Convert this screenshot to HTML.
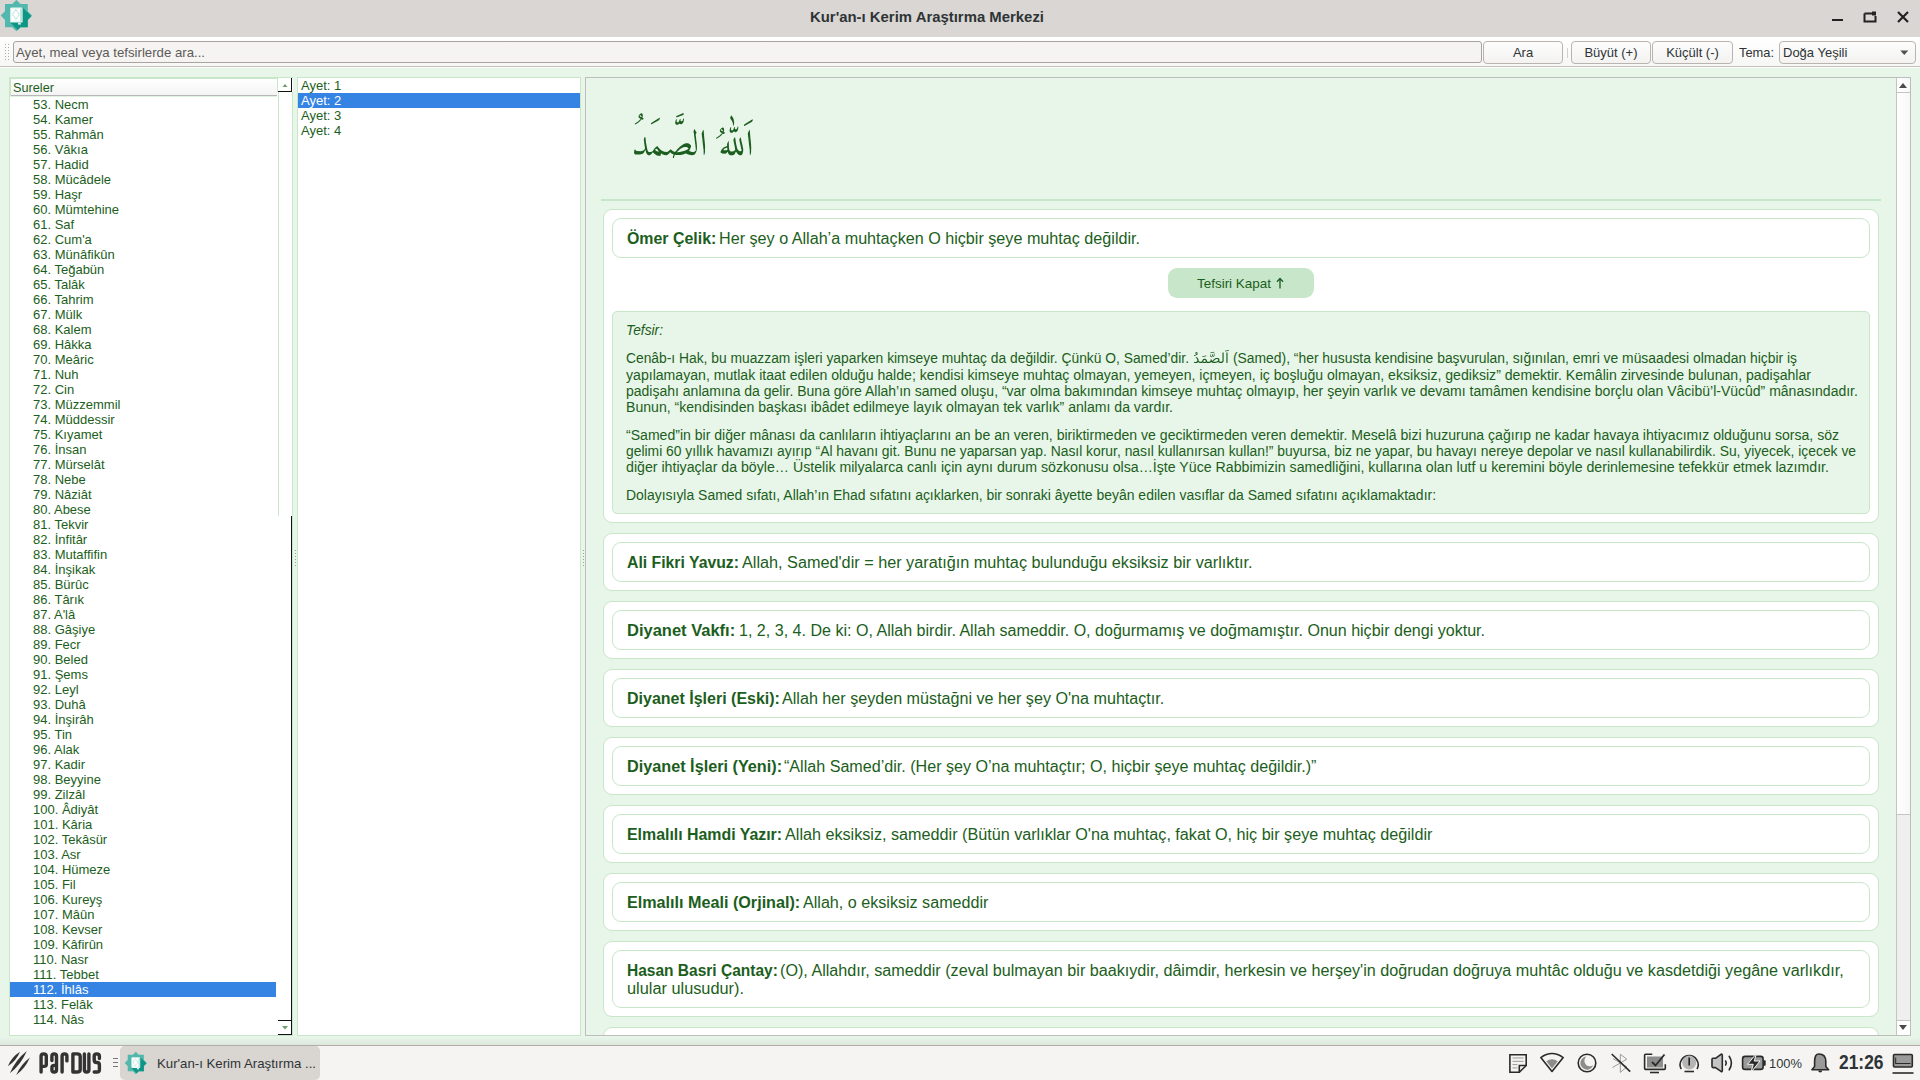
<!DOCTYPE html><html><head><meta charset="utf-8"><style>
*{box-sizing:border-box;margin:0;padding:0}
html,body{width:1920px;height:1080px;overflow:hidden;background:#e8f5e9;font-family:"Liberation Sans",sans-serif}
.a{position:absolute}
.fit{display:inline-block;white-space:nowrap;transform-origin:0 50%}
#title{left:0;top:0;width:1920px;height:37px;background:#dad6d3}
#tool{left:0;top:37px;width:1920px;height:30px;background:linear-gradient(#ffffff,#f6f6f5)}
.btn{position:absolute;height:23px;border:1px solid #b9b4ae;border-radius:4px;background:linear-gradient(#fdfdfd,#f3f2f1);font-size:13px;color:#2e3436;text-align:center;line-height:21px}
.list{position:absolute;background:#fff;font-size:12px;color:#1b5e20}
.row{position:absolute;height:15px;line-height:15px;white-space:nowrap}
.sel{background:#3584e4;color:#fff}
.card{position:absolute;left:603px;width:1276px;background:#fff;border:1px solid #c8e6c9;border-radius:9px}
.meal{position:absolute;left:612px;width:1258px;background:#fff;border:1px solid #c8e6c9;border-radius:9px;font-size:16px;color:#1b5e20}
.meal b{font-weight:bold}
.tl{position:absolute;left:626px;font-size:14px;color:#1b5e20;line-height:16px;white-space:nowrap}
</style></head><body>
<div id="title" class="a">
<svg class="a" style="left:0;top:0" width="34" height="34" viewBox="0 0 34 34">
<defs><clipPath id="star1"><rect x="5" y="4" width="22.8" height="23.2"/><rect x="-11.1" y="-11.1" width="22.2" height="22.2" transform="translate(16.4,15.6) rotate(45)"/></clipPath></defs>
<g clip-path="url(#star1)">
<rect x="0" y="0" width="34" height="34" fill="#52b8ad"/>
<path d="M22.6 7.4 L42.6 27.4 L30.2 42.6 L10.2 22.6 Z" fill="#0f9585"/>
</g>
<rect x="10.2" y="7.4" width="12.4" height="15.2" rx="1.2" fill="#eaf7f5"/>
<rect x="11.6" y="8.8" width="8.6" height="11.8" fill="#ffffff"/>
<rect x="20.4" y="8.4" width="1.4" height="13.2" fill="#a9dcd6"/>
<path d="M15.9 9.6 L19.4 14.6 L15.9 19.6 L12.4 14.6 Z" fill="#fff" stroke="#6cc4b9" stroke-width="0.8" stroke-dasharray="1.2 0.9"/>
<rect x="18" y="22.6" width="2.8" height="2" fill="#d5efeb"/>
</svg>
<div class="a" style="left:810px;top:8px;font-size:15px;font-weight:bold;color:#2e3436"><span class="fit" style="transform:scaleX(0.9932);">Kur'an-ı Kerim Araştırma Merkezi</span></div>
<div class="a" style="left:1832px;top:19px;width:11px;height:2px;background:#222"></div>
<svg class="a" style="left:1863px;top:10px" width="14" height="14" viewBox="0 0 14 14"><path d="M1.5 3.5 H9 M1.5 3.5 V11.5 H12.5 V6" fill="none" stroke="#222" stroke-width="2"/><rect x="9" y="1.5" width="4" height="4" fill="#222"/></svg>
<svg class="a" style="left:1896px;top:10px" width="14" height="14" viewBox="0 0 14 14"><path d="M2 2 L12 12 M12 2 L2 12" stroke="#222" stroke-width="2.2"/></svg>
</div>
<div id="tool" class="a">
<div class="a" style="left:5px;top:7px;width:1px;height:1px;background:#b0aca8"></div>
<div class="a" style="left:8px;top:7px;width:1px;height:1px;background:#b0aca8"></div>
<div class="a" style="left:5px;top:10px;width:1px;height:1px;background:#b0aca8"></div>
<div class="a" style="left:8px;top:10px;width:1px;height:1px;background:#b0aca8"></div>
<div class="a" style="left:5px;top:13px;width:1px;height:1px;background:#b0aca8"></div>
<div class="a" style="left:8px;top:13px;width:1px;height:1px;background:#b0aca8"></div>
<div class="a" style="left:5px;top:16px;width:1px;height:1px;background:#b0aca8"></div>
<div class="a" style="left:8px;top:16px;width:1px;height:1px;background:#b0aca8"></div>
<div class="a" style="left:5px;top:19px;width:1px;height:1px;background:#b0aca8"></div>
<div class="a" style="left:8px;top:19px;width:1px;height:1px;background:#b0aca8"></div>
<div class="a" style="left:5px;top:22px;width:1px;height:1px;background:#b0aca8"></div>
<div class="a" style="left:8px;top:22px;width:1px;height:1px;background:#b0aca8"></div>
<div class="a" style="left:13px;top:4px;width:1469px;height:22px;border:1px solid #a9a49f;border-radius:3px;background:#f5f4f3;"></div>
<div class="a" style="left:16px;top:8px;font-size:13px;color:#5e5a57"><span class="fit" style="transform:scaleX(1.0151);">Ayet, meal veya tefsirlerde ara...</span></div>
<div class="btn" style="left:1483px;top:4px;width:80px">Ara</div>
<div class="a" style="left:1567px;top:11px;width:1px;height:10px;background:#d5d2ce"></div>
<div class="btn" style="left:1571px;top:4px;width:80px">Büyüt (+)</div>
<div class="btn" style="left:1652px;top:4px;width:81px">Küçült (-)</div>
<div class="a" style="left:1739px;top:8px;font-size:13px;color:#2e3436"><span class="fit" style="transform:scaleX(0.9885);">Tema:</span></div>
<div class="btn" style="left:1779px;top:4px;width:137px;text-align:left;padding-left:3px"><span class="fit">Doğa Yeşili</span></div>
<svg class="a" style="left:1900px;top:13px" width="9" height="6"><path d="M0.3 0.5 H8.3 L4.3 5 Z" fill="#505050"/></svg>
<div class="a" style="left:0;top:29px;width:1920px;height:1px;background:#c4c1bd"></div>
<div class="a" style="left:0;top:30px;width:1920px;height:1px;background:#fafcfa"></div>
</div>
<div class="a" style="left:0;top:1037px;width:1920px;height:8px;background:linear-gradient(#e8f5e9,#dde8de)"></div>
<div class="list" style="left:9px;top:77px;width:284px;height:959px;border:1px solid #c8e6c9;border-right:none"></div>
<div class="a" style="left:11px;top:79px;width:266px;height:17px;background:linear-gradient(#ffffff,#f5f4f4);border-bottom:1px solid #b9b5b9"></div><div class="a" style="left:10px;top:78px;width:267px;height:1px;background:#c8e6c9"></div><div class="a" style="left:10px;top:78px;width:1px;height:18px;background:#c8e6c9"></div>
<div class="a" style="left:13px;top:80px;font-size:13px;color:#1b5e20"><span class="fit" style="transform:scaleX(0.9780);">Sureler</span></div>
<div class="a" style="left:33px;top:97px;font-size:13px;line-height:15px;color:#1b5e20"><span class="fit">53. Necm</span></div>
<div class="a" style="left:33px;top:112px;font-size:13px;line-height:15px;color:#1b5e20"><span class="fit">54. Kamer</span></div>
<div class="a" style="left:33px;top:127px;font-size:13px;line-height:15px;color:#1b5e20"><span class="fit">55. Rahmân</span></div>
<div class="a" style="left:33px;top:142px;font-size:13px;line-height:15px;color:#1b5e20"><span class="fit">56. Vâkıa</span></div>
<div class="a" style="left:33px;top:157px;font-size:13px;line-height:15px;color:#1b5e20"><span class="fit">57. Hadid</span></div>
<div class="a" style="left:33px;top:172px;font-size:13px;line-height:15px;color:#1b5e20"><span class="fit">58. Mücâdele</span></div>
<div class="a" style="left:33px;top:187px;font-size:13px;line-height:15px;color:#1b5e20"><span class="fit">59. Haşr</span></div>
<div class="a" style="left:33px;top:202px;font-size:13px;line-height:15px;color:#1b5e20"><span class="fit">60. Mümtehine</span></div>
<div class="a" style="left:33px;top:217px;font-size:13px;line-height:15px;color:#1b5e20"><span class="fit">61. Saf</span></div>
<div class="a" style="left:33px;top:232px;font-size:13px;line-height:15px;color:#1b5e20"><span class="fit">62. Cum'a</span></div>
<div class="a" style="left:33px;top:247px;font-size:13px;line-height:15px;color:#1b5e20"><span class="fit">63. Münâfikûn</span></div>
<div class="a" style="left:33px;top:262px;font-size:13px;line-height:15px;color:#1b5e20"><span class="fit">64. Teğabün</span></div>
<div class="a" style="left:33px;top:277px;font-size:13px;line-height:15px;color:#1b5e20"><span class="fit">65. Talâk</span></div>
<div class="a" style="left:33px;top:292px;font-size:13px;line-height:15px;color:#1b5e20"><span class="fit">66. Tahrim</span></div>
<div class="a" style="left:33px;top:307px;font-size:13px;line-height:15px;color:#1b5e20"><span class="fit">67. Mülk</span></div>
<div class="a" style="left:33px;top:322px;font-size:13px;line-height:15px;color:#1b5e20"><span class="fit">68. Kalem</span></div>
<div class="a" style="left:33px;top:337px;font-size:13px;line-height:15px;color:#1b5e20"><span class="fit">69. Hâkka</span></div>
<div class="a" style="left:33px;top:352px;font-size:13px;line-height:15px;color:#1b5e20"><span class="fit">70. Meâric</span></div>
<div class="a" style="left:33px;top:367px;font-size:13px;line-height:15px;color:#1b5e20"><span class="fit">71. Nuh</span></div>
<div class="a" style="left:33px;top:382px;font-size:13px;line-height:15px;color:#1b5e20"><span class="fit">72. Cin</span></div>
<div class="a" style="left:33px;top:397px;font-size:13px;line-height:15px;color:#1b5e20"><span class="fit">73. Müzzemmil</span></div>
<div class="a" style="left:33px;top:412px;font-size:13px;line-height:15px;color:#1b5e20"><span class="fit">74. Müddessir</span></div>
<div class="a" style="left:33px;top:427px;font-size:13px;line-height:15px;color:#1b5e20"><span class="fit">75. Kıyamet</span></div>
<div class="a" style="left:33px;top:442px;font-size:13px;line-height:15px;color:#1b5e20"><span class="fit">76. İnsan</span></div>
<div class="a" style="left:33px;top:457px;font-size:13px;line-height:15px;color:#1b5e20"><span class="fit">77. Mürselât</span></div>
<div class="a" style="left:33px;top:472px;font-size:13px;line-height:15px;color:#1b5e20"><span class="fit">78. Nebe</span></div>
<div class="a" style="left:33px;top:487px;font-size:13px;line-height:15px;color:#1b5e20"><span class="fit">79. Nâziât</span></div>
<div class="a" style="left:33px;top:502px;font-size:13px;line-height:15px;color:#1b5e20"><span class="fit">80. Abese</span></div>
<div class="a" style="left:33px;top:517px;font-size:13px;line-height:15px;color:#1b5e20"><span class="fit">81. Tekvir</span></div>
<div class="a" style="left:33px;top:532px;font-size:13px;line-height:15px;color:#1b5e20"><span class="fit">82. İnfitâr</span></div>
<div class="a" style="left:33px;top:547px;font-size:13px;line-height:15px;color:#1b5e20"><span class="fit">83. Mutaffifin</span></div>
<div class="a" style="left:33px;top:562px;font-size:13px;line-height:15px;color:#1b5e20"><span class="fit">84. İnşikak</span></div>
<div class="a" style="left:33px;top:577px;font-size:13px;line-height:15px;color:#1b5e20"><span class="fit">85. Bürûc</span></div>
<div class="a" style="left:33px;top:592px;font-size:13px;line-height:15px;color:#1b5e20"><span class="fit">86. Târık</span></div>
<div class="a" style="left:33px;top:607px;font-size:13px;line-height:15px;color:#1b5e20"><span class="fit">87. A'lâ</span></div>
<div class="a" style="left:33px;top:622px;font-size:13px;line-height:15px;color:#1b5e20"><span class="fit">88. Gâşiye</span></div>
<div class="a" style="left:33px;top:637px;font-size:13px;line-height:15px;color:#1b5e20"><span class="fit">89. Fecr</span></div>
<div class="a" style="left:33px;top:652px;font-size:13px;line-height:15px;color:#1b5e20"><span class="fit">90. Beled</span></div>
<div class="a" style="left:33px;top:667px;font-size:13px;line-height:15px;color:#1b5e20"><span class="fit">91. Şems</span></div>
<div class="a" style="left:33px;top:682px;font-size:13px;line-height:15px;color:#1b5e20"><span class="fit">92. Leyl</span></div>
<div class="a" style="left:33px;top:697px;font-size:13px;line-height:15px;color:#1b5e20"><span class="fit">93. Duhâ</span></div>
<div class="a" style="left:33px;top:712px;font-size:13px;line-height:15px;color:#1b5e20"><span class="fit">94. İnşirâh</span></div>
<div class="a" style="left:33px;top:727px;font-size:13px;line-height:15px;color:#1b5e20"><span class="fit">95. Tin</span></div>
<div class="a" style="left:33px;top:742px;font-size:13px;line-height:15px;color:#1b5e20"><span class="fit">96. Alak</span></div>
<div class="a" style="left:33px;top:757px;font-size:13px;line-height:15px;color:#1b5e20"><span class="fit">97. Kadir</span></div>
<div class="a" style="left:33px;top:772px;font-size:13px;line-height:15px;color:#1b5e20"><span class="fit">98. Beyyine</span></div>
<div class="a" style="left:33px;top:787px;font-size:13px;line-height:15px;color:#1b5e20"><span class="fit">99. Zilzâl</span></div>
<div class="a" style="left:33px;top:802px;font-size:13px;line-height:15px;color:#1b5e20"><span class="fit">100. Âdiyât</span></div>
<div class="a" style="left:33px;top:817px;font-size:13px;line-height:15px;color:#1b5e20"><span class="fit">101. Kâria</span></div>
<div class="a" style="left:33px;top:832px;font-size:13px;line-height:15px;color:#1b5e20"><span class="fit">102. Tekâsür</span></div>
<div class="a" style="left:33px;top:847px;font-size:13px;line-height:15px;color:#1b5e20"><span class="fit">103. Asr</span></div>
<div class="a" style="left:33px;top:862px;font-size:13px;line-height:15px;color:#1b5e20"><span class="fit">104. Hümeze</span></div>
<div class="a" style="left:33px;top:877px;font-size:13px;line-height:15px;color:#1b5e20"><span class="fit">105. Fil</span></div>
<div class="a" style="left:33px;top:892px;font-size:13px;line-height:15px;color:#1b5e20"><span class="fit">106. Kureyş</span></div>
<div class="a" style="left:33px;top:907px;font-size:13px;line-height:15px;color:#1b5e20"><span class="fit">107. Mâûn</span></div>
<div class="a" style="left:33px;top:922px;font-size:13px;line-height:15px;color:#1b5e20"><span class="fit">108. Kevser</span></div>
<div class="a" style="left:33px;top:937px;font-size:13px;line-height:15px;color:#1b5e20"><span class="fit">109. Kâfirûn</span></div>
<div class="a" style="left:33px;top:952px;font-size:13px;line-height:15px;color:#1b5e20"><span class="fit">110. Nasr</span></div>
<div class="a" style="left:33px;top:967px;font-size:13px;line-height:15px;color:#1b5e20"><span class="fit">111. Tebbet</span></div>
<div class="row sel" style="left:10px;top:982px;width:266px"></div>
<div class="a" style="left:33px;top:982px;font-size:13px;line-height:15px;color:#fff"><span class="fit">112. İhlâs</span></div>
<div class="a" style="left:33px;top:997px;font-size:13px;line-height:15px;color:#1b5e20"><span class="fit">113. Felâk</span></div>
<div class="a" style="left:33px;top:1012px;font-size:13px;line-height:15px;color:#1b5e20"><span class="fit">114. Nâs</span></div>
<div class="a" style="left:278px;top:92px;width:1px;height:424px;background:#c8e6c9"></div><div class="a" style="left:277px;top:78px;width:1px;height:14px;background:#c8e6c9"></div><div class="a" style="left:10px;top:96px;width:267px;height:1px;background:#dff3df"></div>
<div class="a" style="left:291px;top:78px;width:1px;height:14px;background:#111"></div>
<div class="a" style="left:278px;top:91px;width:14px;height:1px;background:#111"></div>
<svg class="a" style="left:282px;top:83.5px" width="6" height="3.5"><path d="M0 3.5 L3 0 L6 3.5 Z" fill="#6f9f71"/></svg>
<div class="a" style="left:291px;top:516px;width:1px;height:519px;background:#111"></div>
<div class="a" style="left:278px;top:1020px;width:13px;height:1px;background:#111"></div>
<div class="a" style="left:278px;top:1034px;width:14px;height:1px;background:#111"></div>
<svg class="a" style="left:282px;top:1026px" width="6" height="3.5"><path d="M0 0 L6 0 L3 3.5 Z" fill="#6f9f71"/></svg>
<div class="a" style="left:292px;top:92px;width:1px;height:944px;background:#c8e6c9"></div>
<div class="a" style="left:295px;top:550px;width:1px;height:1px;background:#9e9e9e"></div>
<div class="a" style="left:583px;top:550px;width:1px;height:1px;background:#9e9e9e"></div>
<div class="a" style="left:295px;top:553px;width:1px;height:1px;background:#9e9e9e"></div>
<div class="a" style="left:583px;top:553px;width:1px;height:1px;background:#9e9e9e"></div>
<div class="a" style="left:295px;top:556px;width:1px;height:1px;background:#9e9e9e"></div>
<div class="a" style="left:583px;top:556px;width:1px;height:1px;background:#9e9e9e"></div>
<div class="a" style="left:295px;top:559px;width:1px;height:1px;background:#9e9e9e"></div>
<div class="a" style="left:583px;top:559px;width:1px;height:1px;background:#9e9e9e"></div>
<div class="a" style="left:295px;top:562px;width:1px;height:1px;background:#9e9e9e"></div>
<div class="a" style="left:583px;top:562px;width:1px;height:1px;background:#9e9e9e"></div>
<div class="a" style="left:295px;top:565px;width:1px;height:1px;background:#9e9e9e"></div>
<div class="a" style="left:583px;top:565px;width:1px;height:1px;background:#9e9e9e"></div>
<div class="list" style="left:297px;top:77px;width:284px;height:959px;border:1px solid #c8e6c9"></div>
<div class="a" style="left:301px;top:78px;font-size:13px;line-height:15px;color:#1b5e20"><span class="fit">Ayet: 1</span></div>
<div class="row sel" style="left:298px;top:93px;width:282px"></div>
<div class="a" style="left:301px;top:93px;font-size:13px;line-height:15px;color:#fff"><span class="fit">Ayet: 2</span></div>
<div class="a" style="left:301px;top:108px;font-size:13px;line-height:15px;color:#1b5e20"><span class="fit">Ayet: 3</span></div>
<div class="a" style="left:301px;top:123px;font-size:13px;line-height:15px;color:#1b5e20"><span class="fit">Ayet: 4</span></div>
<div class="a" style="left:585px;top:77px;width:1326px;height:959px;border:1px solid #bdbdbd;border-right:2px solid #bdbdbd;overflow:hidden;background:#e8f5e9">
</div>
<div class="a" style="left:1896px;top:78px;width:14px;height:957px;background:#efefef;border-left:1px solid #c4c4c4"></div>
<div class="a" style="left:1897px;top:78px;width:13px;height:737px;background:linear-gradient(90deg,#fff,#f7f7f7)"></div>
<div class="a" style="left:1897px;top:92px;width:13px;height:1px;background:#c4c4c4"></div>
<div class="a" style="left:1897px;top:814px;width:13px;height:1px;background:#c4c4c4"></div>
<svg class="a" style="left:1899px;top:83px" width="8" height="5"><path d="M0 5 L4 0 L8 5 Z" fill="#4a4a4a"/></svg>
<div class="a" style="left:1897px;top:1020px;width:13px;height:15px;background:#fff;border-top:1px solid #c4c4c4"></div>
<svg class="a" style="left:1899px;top:1025px" width="8" height="5"><path d="M0 0 L8 0 L4 5 Z" fill="#4a4a4a"/></svg>
<svg class="a" style="left:633.7px;top:112.5px" width="119.1" height="45.3" viewBox="0 0 772 296" preserveAspectRatio="none"><path d="M691 159 L689 160 L684 169 L683 180 L689 205 L689 209 L692 218 L692 222 L694 227 L694 231 L696 236 L697 246 L698 247 L697 249 L689 250 L682 248 L673 240 L670 235 L662 203 L656 162 L653 159 L645 172 L645 182 L654 225 L654 230 L656 237 L655 242 L649 248 L638 252 L627 251 L620 245 L616 233 L614 183 L613 182 L603 202 L604 215 L587 222 L577 229 L567 240 L561 253 L562 260 L573 265 L588 266 L597 264 L607 253 L611 265 L619 274 L624 276 L639 276 L648 273 L652 269 L661 252 L671 267 L678 273 L686 276 L694 276 L698 274 L701 271 L705 262 L708 246 L708 236 L700 196 L696 182 L695 173Z M605 231 L605 241 L599 244 L588 244 L587 243 L582 243 L579 241 L585 234 L597 228 L603 226Z M749 110 L747 111 L738 132 L738 142 L739 143 L740 159 L741 160 L746 210 L747 211 L747 219 L748 220 L748 229 L750 238 L751 274 L753 276 L757 267 L759 257 L760 218 L759 217 L759 202 L758 201 L758 190 L757 189 L756 171 L755 170 L751 118Z M450 110 L448 111 L439 132 L439 142 L440 143 L441 159 L442 160 L447 210 L448 211 L448 219 L449 220 L449 229 L451 238 L452 274 L454 276 L458 267 L460 257 L461 218 L460 217 L460 202 L459 201 L459 190 L458 189 L457 171 L456 170 L452 118Z M406 127 L399 118 L395 108 L393 106 L391 107 L386 119 L386 125 L388 131 L390 152 L392 160 L392 167 L393 168 L393 175 L394 176 L394 183 L395 184 L395 191 L396 192 L396 199 L398 208 L398 216 L399 217 L399 225 L400 226 L400 238 L401 239 L400 246 L391 254 L384 256 L383 255 L376 255 L357 249 L368 226 L368 223 L370 219 L369 212 L362 204 L354 199 L348 197 L336 197 L322 203 L297 221 L281 237 L268 254 L261 253 L253 250 L237 237 L225 249 L215 255 L197 254 L185 249 L176 243 L162 230 L153 218 L150 218 L144 221 L134 230 L122 249 L115 253 L108 255 L96 255 L92 252 L87 242 L78 195 L74 158 L71 155 L64 169 L64 181 L65 182 L67 204 L68 205 L68 211 L71 226 L71 233 L69 237 L61 245 L45 250 L17 249 L11 244 L8 238 L5 238 L3 241 L1 249 L1 257 L0 258 L1 264 L6 270 L12 272 L34 272 L35 271 L46 270 L57 266 L65 258 L72 243 L74 242 L76 246 L78 257 L82 266 L88 273 L94 276 L101 276 L110 271 L122 257 L132 267 L139 272 L149 277 L159 280 L164 280 L165 281 L171 280 L173 277 L174 266 L175 265 L177 265 L181 268 L195 274 L210 276 L216 274 L222 270 L228 264 L231 259 L235 256 L243 264 L257 271 L252 287 L252 293 L254 295 L257 295 L259 293 L262 280 L265 273 L275 275 L301 275 L318 271 L334 264 L337 264 L352 271 L366 275 L371 275 L372 276 L387 275 L394 270 L399 263 L404 252 L408 237 L408 209 L407 208 L406 189 L405 188 L401 148 L400 147 L400 138 L405 131Z M137 240 L141 236 L149 233 L161 253 L158 254 L145 248 L137 242Z M354 232 L344 240 L324 249 L296 255 L289 255 L288 256 L280 256 L279 255 L299 235 L310 228 L325 222 L339 222 L348 226Z M578 95 L574 95 L566 99 L559 108 L556 116 L558 122 L563 127 L569 130 L570 132 L553 149 L536 160 L532 164 L532 166 L534 168 L544 164 L558 154 L570 142 L576 134 L581 137 L586 136 L589 128 L581 123 L584 115 L584 104 L582 99Z M567 107 L570 107 L576 114 L576 119 L575 120 L569 118 L564 114 L563 111Z M676 90 L674 88 L671 90 L670 98 L664 106 L658 106 L655 104 L654 102 L654 91 L650 91 L645 106 L640 112 L635 114 L632 113 L629 109 L629 102 L631 96 L629 93 L626 93 L623 99 L620 111 L620 119 L624 127 L628 129 L636 129 L641 127 L648 119 L656 125 L660 125 L665 123 L670 118 L673 112 L676 100Z M771 43 L770 42 L766 43 L719 72 L713 78 L713 85 L716 85 L765 57 L768 53Z M323 37 L320 36 L318 38 L316 49 L311 54 L305 54 L301 49 L302 40 L298 39 L291 56 L287 60 L282 62 L276 56 L278 43 L277 41 L274 41 L271 45 L267 60 L267 66 L269 72 L275 77 L284 77 L292 72 L295 68 L303 73 L307 73 L312 71 L317 66 L321 58 L324 42Z M168 31 L165 31 L114 63 L111 66 L110 69 L111 74 L114 74 L161 47 L166 41Z M629 16 L624 30 L624 36 L632 47 L638 59 L642 72 L643 81 L644 83 L646 83 L648 79 L648 72 L649 71 L649 56 L648 55 L647 45 L645 41 L645 38 L639 26 L631 16Z M51 2 L47 2 L39 6 L32 15 L29 23 L31 29 L36 34 L42 37 L43 39 L26 56 L9 67 L5 71 L5 73 L7 75 L17 71 L31 61 L43 49 L49 41 L54 44 L59 43 L62 35 L54 30 L57 22 L57 11 L55 6Z M40 14 L43 14 L49 21 L49 26 L48 27 L42 25 L37 21 L36 18Z M322 0 L316 1 L276 19 L273 23 L273 27 L274 28 L279 27 L319 13 L321 11Z" fill="#1b5e20" fill-rule="evenodd"/></svg>
<div class="a" style="left:601px;top:199px;width:1280px;height:2px;background:#c8e6c9"></div>
<div class="card" style="top:209px;height:314px"></div>
<div class="meal" style="top:218px;height:40px"></div>
<div class="a" style="left:627px;top:230px;font-size:16px;font-weight:bold;color:#1b5e20"><span class="fit" style="transform:scaleX(0.9943);">Ömer Çelik:</span></div>
<div class="a" style="left:719.0px;top:230px;font-size:16px;color:#1b5e20"><span class="fit" style="transform:scaleX(1.0094);">Her şey o Allah’a muhtaçken O hiçbir şeye muhtaç değildir.</span></div>
<div class="a" style="left:1168px;top:268px;width:146px;height:30px;background:#c8e6c9;border-radius:9px"></div>
<div class="a" style="left:1197px;top:276px;font-size:13px;color:#1b5e20"><span class="fit" style="transform:scaleX(1.0343);">Tefsiri Kapat</span></div>
<svg class="a" style="left:1276px;top:277px" width="8" height="12" viewBox="0 0 8 12"><path d="M4 11.5 V2 M1 4.8 L4 1.5 L7 4.8" fill="none" stroke="#1b5e20" stroke-width="1.3"/></svg>
<div class="a" style="left:612px;top:311px;width:1258px;height:203px;background:#e8f5e9;border:1px solid #c8e6c9;border-radius:5px"></div>
<div class="tl" style="top:322px;font-style:italic"><span class="fit" style="transform:scaleX(0.9838);">Tefsir:</span></div>
<div class="tl" style="top:367px"><span class="fit" style="transform:scaleX(1.0065);">yapılamayan, mutlak itaat edilen olduğu halde; kendisi kimseye muhtaç olmayan, yemeyen, içmeyen, iç boşluğu olmayan, eksiksiz, gediksiz” demektir. Kemâlin zirvesinde bulunan, padişahlar</span></div>
<div class="tl" style="top:383px"><span class="fit">padişahı anlamına da gelir. Buna göre Allah’ın samed oluşu, “var olma bakımından kimseye muhtaç olmayıp, her şeyin varlık ve devamı tamâmen kendisine borçlu olan Vâcibü’l-Vücûd” mânasındadır.</span></div>
<div class="tl" style="top:399px"><span class="fit" style="transform:scaleX(1.0056);">Bunun, “kendisinden başkası ibâdet edilmeye layık olmayan tek varlık” anlamı da vardır.</span></div>
<div class="tl" style="top:427px"><span class="fit" style="transform:scaleX(1.0044);">“Samed”in bir diğer mânası da canlıların ihtiyaçlarını an be an veren, biriktirmeden ve geciktirmeden veren demektir. Meselâ bizi huzuruna çağırıp ne kadar havaya ihtiyacımız olduğunu sorsa, söz</span></div>
<div class="tl" style="top:443px"><span class="fit" style="transform:scaleX(0.9904);">gelimi 60 yıllık havamızı ayırıp “Al havanı git. Bunu ne yaparsan yap. Nasıl korur, nasıl kullanırsan kullan!” buyursa, biz ne yapar, bu havayı nereye depolar ve nasıl kullanabilirdik. Su, yiyecek, içecek ve</span></div>
<div class="tl" style="top:459px"><span class="fit" style="transform:scaleX(1.0120);">diğer ihtiyaçlar da böyle… Üstelik milyalarca canlı için aynı durum sözkonusu olsa…İşte Yüce Rabbimizin samedliğini, kullarına olan lutf u keremini böyle derinlemesine tefekkür etmek lazımdır.</span></div>
<div class="tl" style="top:487px"><span class="fit" style="transform:scaleX(0.9961);">Dolayısıyla Samed sıfatı, Allah’ın Ehad sıfatını açıklarken, bir sonraki âyette beyân edilen vasıflar da Samed sıfatını açıklamaktadır:</span></div>
<div class="tl" style="top:350px"><span class="fit" style="transform:scaleX(0.9871);">Cenâb-ı Hak, bu muazzam işleri yaparken kimseye muhtaç da değildir. Çünkü O, Samed’dir.</span></div>
<div class="tl" style="top:350px;left:1233px"><span class="fit" style="transform:scaleX(0.9901);">(Samed), “her hususta kendisine başvurulan, sığınılan, emri ve müsaadesi olmadan hiçbir iş</span></div>
<svg class="a" style="left:1193.7px;top:350px" width="35" height="13.3" viewBox="0 0 601 229" preserveAspectRatio="none"><path d="M211 94 L143 109 L143 121 L211 106Z M351 62 L350 61 L339 61 L341 70 L341 88 L338 98 L333 102 L328 101 L323 95 L321 86 L321 69 L311 69 L309 102 L307 107 L301 112 L296 112 L292 108 L291 105 L291 81 L292 76 L281 76 L280 109 L284 119 L287 122 L293 125 L303 124 L307 122 L312 117 L318 104 L322 113 L327 116 L335 116 L342 113 L347 108 L351 98 L351 91 L352 90Z M556 41 L556 222 L576 222 L576 41Z M509 41 L489 41 L489 181 L486 192 L479 199 L465 202 L462 201 L453 202 L440 199 L432 193 L435 188 L437 181 L437 168 L434 157 L428 148 L423 144 L412 139 L397 136 L383 136 L372 139 L348 153 L337 162 L323 176 L313 189 L309 185 L306 179 L305 162 L284 162 L284 181 L283 184 L276 195 L271 199 L266 201 L258 201 L257 202 L249 201 L245 202 L244 201 L236 201 L231 199 L225 193 L221 185 L219 173 L213 164 L206 158 L194 152 L186 150 L171 151 L156 158 L148 166 L145 171 L142 180 L141 189 L139 193 L133 199 L123 202 L99 201 L91 198 L81 186 L79 180 L78 167 L74 156 L60 134 L50 124 L24 124 L42 141 L48 149 L56 166 L56 169 L58 173 L58 183 L55 191 L48 198 L37 204 L29 206 L18 206 L2 202 L2 222 L18 226 L40 225 L57 219 L63 215 L71 207 L80 216 L90 221 L95 222 L135 222 L143 220 L149 217 L160 224 L175 228 L190 228 L200 226 L209 221 L214 216 L219 220 L228 222 L270 222 L278 220 L286 216 L296 206 L306 216 L317 221 L322 221 L323 222 L370 222 L371 221 L380 221 L397 217 L416 208 L425 216 L433 220 L443 222 L476 222 L489 219 L500 211 L507 198 L507 194 L509 189Z M171 174 L177 172 L186 172 L193 175 L197 179 L200 186 L200 196 L197 202 L192 207 L189 208 L173 207 L160 200 L163 184 L165 180Z M415 167 L416 176 L414 180 L405 188 L390 196 L369 201 L352 201 L351 202 L330 202 L329 201 L336 191 L352 175 L365 165 L378 158 L384 156 L401 156 L409 159Z M53 39 L46 36 L36 36 L31 38 L26 43 L23 50 L24 61 L32 70 L37 72 L38 74 L33 79 L17 88 L0 91 L0 103 L11 102 L23 98 L43 87 L53 77 L67 77 L67 65 L60 65 L59 64 L60 50 L58 45Z M39 48 L43 48 L48 52 L48 60 L46 63 L38 60 L35 56 L35 52Z M349 29 L304 40 L282 44 L282 56 L348 42 L349 41Z M600 0 L532 15 L532 27 L600 12Z" fill="#1b5e20" fill-rule="evenodd"/></svg>
<div class="card" style="top:533px;height:58px"></div>
<div class="meal" style="top:542px;height:40px"></div>
<div class="a" style="left:627px;top:554px;font-size:16px;font-weight:bold;color:#1b5e20"><span class="fit" style="transform:scaleX(0.9865);">Ali Fikri Yavuz:</span></div>
<div class="a" style="left:741.7px;top:554px;font-size:16px;color:#1b5e20"><span class="fit" style="transform:scaleX(1.0143);">Allah, Samed'dir = her yaratığın muhtaç bulunduğu eksiksiz bir varlıktır.</span></div>
<div class="card" style="top:601px;height:58px"></div>
<div class="meal" style="top:610px;height:40px"></div>
<div class="a" style="left:627px;top:622px;font-size:16px;font-weight:bold;color:#1b5e20"><span class="fit" style="transform:scaleX(1.0311);">Diyanet Vakfı:</span></div>
<div class="a" style="left:738.6px;top:622px;font-size:16px;color:#1b5e20"><span class="fit" style="transform:scaleX(1.0034);">1, 2, 3, 4. De ki: O, Allah birdir. Allah sameddir. O, doğurmamış ve doğmamıştır. Onun hiçbir dengi yoktur.</span></div>
<div class="card" style="top:669px;height:58px"></div>
<div class="meal" style="top:678px;height:40px"></div>
<div class="a" style="left:627px;top:690px;font-size:16px;font-weight:bold;color:#1b5e20"><span class="fit">Diyanet İşleri (Eski):</span></div>
<div class="a" style="left:782.3px;top:690px;font-size:16px;color:#1b5e20"><span class="fit" style="transform:scaleX(1.0080);">Allah her şeyden müstağni ve her şey O'na muhtaçtır.</span></div>
<div class="card" style="top:737px;height:58px"></div>
<div class="meal" style="top:746px;height:40px"></div>
<div class="a" style="left:627px;top:758px;font-size:16px;font-weight:bold;color:#1b5e20"><span class="fit" style="transform:scaleX(1.0141);">Diyanet İşleri (Yeni):</span></div>
<div class="a" style="left:784.2px;top:758px;font-size:16px;color:#1b5e20"><span class="fit" style="transform:scaleX(1.0064);">“Allah Samed’dir. (Her şey O’na muhtaçtır; O, hiçbir şeye muhtaç değildir.)”</span></div>
<div class="card" style="top:805px;height:58px"></div>
<div class="meal" style="top:814px;height:40px"></div>
<div class="a" style="left:627px;top:826px;font-size:16px;font-weight:bold;color:#1b5e20"><span class="fit" style="transform:scaleX(0.9928);">Elmalılı Hamdi Yazır:</span></div>
<div class="a" style="left:785.0px;top:826px;font-size:16px;color:#1b5e20"><span class="fit" style="transform:scaleX(1.0105);">Allah eksiksiz, sameddir (Bütün varlıklar O'na muhtaç, fakat O, hiç bir şeye muhtaç değildir</span></div>
<div class="card" style="top:873px;height:58px"></div>
<div class="meal" style="top:882px;height:40px"></div>
<div class="a" style="left:627px;top:894px;font-size:16px;font-weight:bold;color:#1b5e20"><span class="fit" style="transform:scaleX(1.0094);">Elmalılı Meali (Orjinal):</span></div>
<div class="a" style="left:803.0px;top:894px;font-size:16px;color:#1b5e20"><span class="fit" style="transform:scaleX(1.0072);">Allah, o eksiksiz sameddir</span></div>
<div class="card" style="top:941px;height:76px"></div>
<div class="meal" style="top:950px;height:58px"></div>
<div class="a" style="left:627px;top:962px;font-size:16px;font-weight:bold;color:#1b5e20;line-height:18px"><span class="fit" style="transform:scaleX(0.9690);">Hasan Basri Çantay:</span></div>
<div class="a" style="left:779.9px;top:962px;font-size:16px;color:#1b5e20;line-height:18px"><span class="fit" style="transform:scaleX(1.0097);">(O), Allahdır, sameddir (zeval bulmayan bir baakıydir, dâimdir, herkesin ve herşey'in doğrudan doğruya muhtâc olduğu ve kasdetdiği yegâne varlıkdır,</span></div>
<div class="a" style="left:627px;top:980px;font-size:16px;color:#1b5e20;line-height:18px"><span class="fit" style="transform:scaleX(1.0197);">ulular ulusudur).</span></div>
<div class="card" style="top:1027px;height:40px"></div>
<div class="a" style="left:585px;top:1036px;width:1335px;height:9px;background:linear-gradient(#e8f5e9 10%,#dde8de)"></div>
<div class="a" style="left:585px;top:1035px;width:1326px;height:1px;background:#bdbdbd"></div>
<div class="a" style="left:0;top:1045px;width:1920px;height:35px;background:#f5f4f2;border-top:1px solid #b4aba5"></div>
<svg class="a" style="left:0;top:1045px" width="110" height="35" viewBox="0 0 110 35">
<g fill="#333"><path d="M7.8 21.2 Q16.2 15.9 20.0 6.7 Q11.6 12.0 7.8 21.2Z"/><path d="M9.8 28.3 Q21.2 19.3 26.8 5.9 Q15.4 14.9 9.8 28.3Z"/><path d="M16.2 30.0 Q25.4 23.0 29.9 12.4 Q20.7 19.4 16.2 30.0Z"/></g>
<g fill="none" stroke="#333" stroke-width="3.4" stroke-linecap="round" stroke-linejoin="round">
<path d="M41.1 27 V11 Q41.1 8.9 43.6 8.9 Q46.3 8.9 46.3 11 V19.5 Q46.3 21.4 43.6 21.4 H41.8"/>
<path d="M51.9 15.6 V11 Q51.9 8.9 54.2 8.9 Q56.5 8.9 56.5 11 V25 Q56.5 27 54.2 27 Q51.9 27 51.9 25 V22.5 Q51.9 20.4 54.2 20.4 H56"/>
<path d="M62.1 27 V11 Q62.1 8.9 64.5 8.9 Q66.9 8.9 66.9 11 V15.9"/>
<path d="M72.9 8.9 H76.9 Q80.2 8.9 80.2 11.5 V24.4 Q80.2 27 76.9 27 H72.9 Z"/>
<path d="M84.4 8.9 V25 Q84.4 27 86.6 27 Q88.9 27 88.9 25 V8.9"/>
<path d="M99.4 13.5 V11 Q99.4 8.9 96.8 8.9 Q94.2 8.9 94.2 11 V15 Q94.2 17.5 96.8 17.5 Q99.4 17.5 99.4 20 V25 Q99.4 27 96.8 27 H94.2"/>
</g>
<g stroke="#555" stroke-width="1"><path d="M113 14.5 H118 M113 18 H118 M113 21.5 H118"/></g>
</svg>
<div class="a" style="left:113px;top:1058px;width:5px;height:1px;background:#777"></div><div class="a" style="left:113px;top:1062px;width:5px;height:1px;background:#777"></div><div class="a" style="left:113px;top:1066px;width:5px;height:1px;background:#777"></div>
<div class="a" style="left:120px;top:1046px;width:200px;height:34px;background:#d9d5d1;border-radius:5px"></div>
<svg class="a" style="left:120px;top:1048px" width="32" height="30" viewBox="0 0 32 30"><g transform="translate(15.8,15) scale(0.709) translate(-16.4,-15.6)"><defs><clipPath id="star2"><rect x="5" y="4" width="22.8" height="23.2"/><rect x="-11.1" y="-11.1" width="22.2" height="22.2" transform="translate(16.4,15.6) rotate(45)"/></clipPath></defs>
<g clip-path="url(#star2)">
<rect x="0" y="0" width="34" height="34" fill="#52b8ad"/>
<path d="M22.6 7.4 L42.6 27.4 L30.2 42.6 L10.2 22.6 Z" fill="#0f9585"/>
</g>
<rect x="10.2" y="7.4" width="12.4" height="15.2" rx="1.2" fill="#eaf7f5"/>
<rect x="11.6" y="8.8" width="8.6" height="11.8" fill="#ffffff"/>
<rect x="20.4" y="8.4" width="1.4" height="13.2" fill="#a9dcd6"/>
<path d="M15.9 9.6 L19.4 14.6 L15.9 19.6 L12.4 14.6 Z" fill="#fff" stroke="#6cc4b9" stroke-width="0.8" stroke-dasharray="1.2 0.9"/>
<rect x="18" y="22.6" width="2.8" height="2" fill="#d5efeb"/>
</g></svg>
<div class="a" style="left:157px;top:1056px;font-size:13px;color:#2e3436"><span class="fit" style="transform:scaleX(1.0169);">Kur'an-ı Kerim Araştırma ...</span></div>
<svg class="a" style="left:1500px;top:1046px" width="420" height="34" viewBox="0 0 420 34">
<g fill="none" stroke="#2a2a2a" stroke-width="1.6">
<path d="M9.9 8.8 H26.2 V19.5 L19.3 26.3 H9.9 Z"/>
<path d="M19.3 26.3 V19.5 H26.2"/>
</g>
<g stroke="#999" stroke-width="1"><path d="M12.5 12 H23.5 M12.5 15.3 H23.5 M12.5 18.6 H17.5 M12.5 21.9 H17.5"/></g>
<path d="M40.8 11.6 Q52 3.5 63.2 11.6 L52 25.5 Z" fill="none" stroke="#2a2a2a" stroke-width="1.6" stroke-linejoin="round"/>
<path d="M46.3 15.2 Q52 11.5 57.8 15.2 L52 22.5 Z" fill="#8c8c8c"/>
<circle cx="87" cy="17" r="8.8" fill="none" stroke="#2a2a2a" stroke-width="1.6"/>
<path d="M86.5 10.5 A6.6 6.6 0 1 0 93.2 19.2 A5.2 5.2 0 0 1 86.5 10.5 Z" fill="#8c8c8c"/>
<g stroke="#9a9a9a" stroke-width="1" fill="none"><path d="M112.5 21.5 L126.8 13.2 L120.3 8.2 V26.4 L126.8 20.8 L113 12.6"/></g>
<path d="M111.7 8 L130.2 25.7" stroke="#2a2a2a" stroke-width="1.6"/>
<path d="M152.3 8.2 H145.6 Q144.6 8.2 144.6 9.2 V22.2 Q144.6 23.4 145.6 23.4 H164.3 Q165.3 23.4 165.3 22.2 V18.2" fill="none" stroke="#2a2a2a" stroke-width="1.6"/>
<rect x="147" y="10.5" width="16" height="11" fill="#8c8c8c"/>
<path d="M152 16 L155.5 19.5 L164.5 8.5" fill="none" stroke="#2a2a2a" stroke-width="1.8"/>
<path d="M150 26.5 H159" stroke="#2a2a2a" stroke-width="1.6"/>
<path d="M181.3 23 A9 9 0 1 1 197 23" fill="none" stroke="#2a2a2a" stroke-width="1.6"/>
<circle cx="189.2" cy="16.6" r="7" fill="#b5b5b5"/>
<path d="M189.2 11.5 V19.5" stroke="#222" stroke-width="1.6"/>
<path d="M184.5 25.5 H194" stroke="#2a2a2a" stroke-width="1.6"/>
</g>
</svg>
<svg class="a" style="left:1700px;top:1046px" width="220" height="34" viewBox="0 0 220 34">
<path d="M13 12.3 H15.5 L21 8.3 Q22.3 7.8 22.3 9.3 V24.6 Q22.3 26 21 25.4 L15.5 21.6 H13 Q12 21.6 12 20.6 V13.3 Q12 12.3 13 12.3 Z" fill="#c4c4c4" stroke="#2a2a2a" stroke-width="1.6" stroke-linejoin="round"/>
<path d="M25.6 15 Q27 17 25.6 19" fill="none" stroke="#2a2a2a" stroke-width="1.6" stroke-linecap="round"/>
<path d="M29.2 10.3 Q33.6 17 29.2 23.8" fill="none" stroke="#2a2a2a" stroke-width="1.6" stroke-linecap="round"/>
<rect x="42.6" y="10.4" width="20.5" height="13" rx="2.5" fill="#9a9a9a" stroke="#2a2a2a" stroke-width="1.6"/>
<rect x="63.1" y="14.2" width="2.6" height="5.5" rx="0.8" fill="#2a2a2a"/>
<path d="M56.5 7.5 L47.5 18.3 H53.3 L50.8 26.5 L60 15 H54.2 Z" fill="#2a2a2a" stroke="#f5f4f2" stroke-width="1" stroke-linejoin="round"/>
<path d="M118.6 8 Q125.5 8 125.5 15.5 V20.5 L128.3 23.8 H111.6 L114.3 20.5 V15.5 Q114.3 8 118.6 8 Z" fill="#9a9a9a" stroke="#2a2a2a" stroke-width="1.6" stroke-linejoin="round" transform="translate(0.3,0)"/>
<path d="M118.2 24.5 A2 2 0 0 0 122.2 24.5" fill="#2a2a2a"/>
<rect x="193.5" y="8.5" width="18.8" height="12.5" rx="1" fill="#9a9a9a" stroke="#2a2a2a" stroke-width="1.6"/>
<path d="M196 17.5 H210.5 M195.7 11.5 V18" stroke="#2a2a2a" stroke-width="1"/>
<path d="M192.5 27 H213.5" stroke="#2a2a2a" stroke-width="1.6"/>
</svg>
<div class="a" style="left:1768.5px;top:1056px;font-size:13px;color:#2e3436"><span class="fit" style="transform:scaleX(0.9925);">100%</span></div>
<div class="a" style="left:1839px;top:1051px;font-size:20px;font-weight:bold;color:#2e3436"><span class="fit" style="transform:scaleX(0.8699);">21:26</span></div>
</body></html>
